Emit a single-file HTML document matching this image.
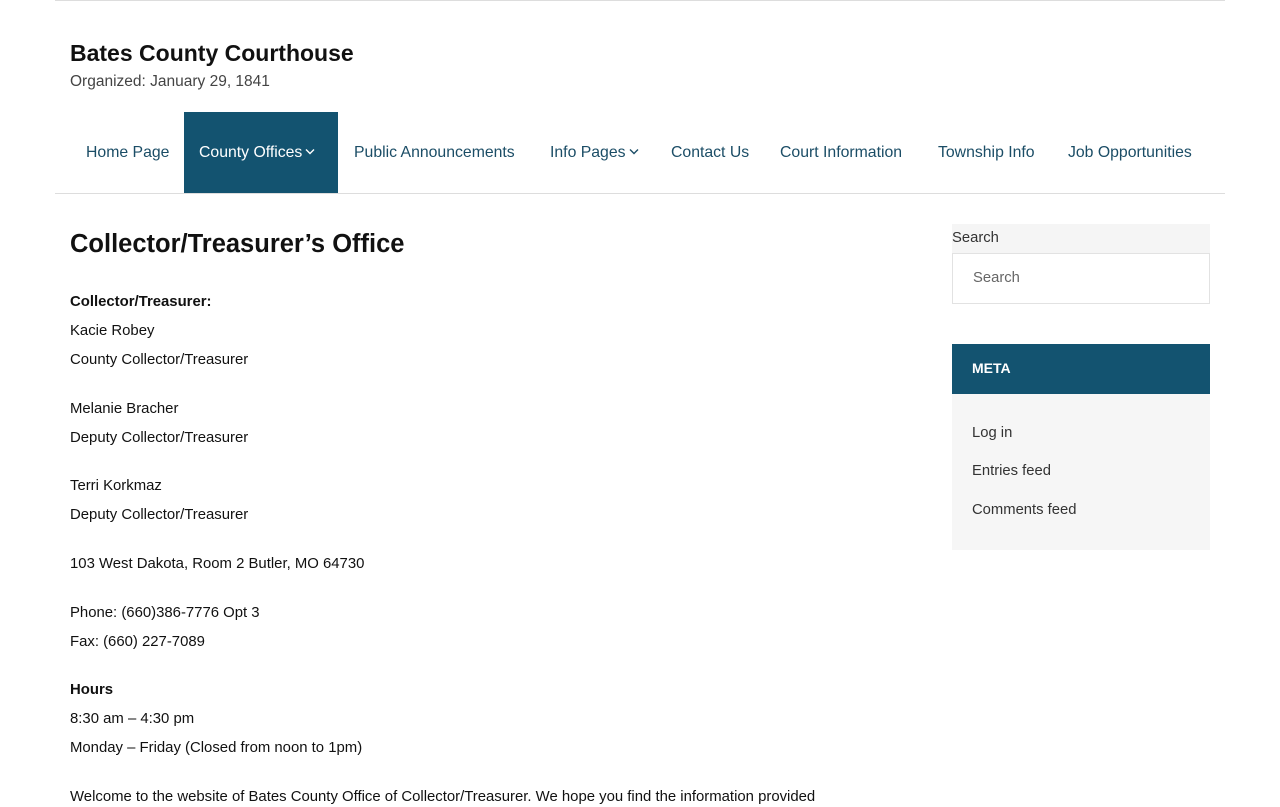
<!DOCTYPE html>
<html><head><meta charset="utf-8"><style>
*{margin:0;padding:0;box-sizing:border-box}
body{width:1280px;height:800px;overflow:hidden;background:#fff;font-family:"Liberation Sans",sans-serif;color:#111;position:relative}
.a{position:absolute;white-space:nowrap}
.t{font-size:14.9px;line-height:20px;left:70px}
.nav{font-size:15.8px;color:#1b4d66;line-height:20px;top:143px}
.b{font-weight:bold}
svg.c{width:10px;height:7px;vertical-align:2px;margin-left:3px}
</style></head><body>
<div class="a" style="left:55px;top:0;width:1170px;height:1px;background:#ddd"></div>
<div class="a b" style="left:70px;top:38px;font-size:23px;line-height:30px;color:#111">Bates County Courthouse</div>
<div class="a" style="left:70px;top:72px;font-size:15.5px;line-height:20px;color:#444">Organized: January 29, 1841</div>
<div class="a" style="left:184px;top:112px;width:154px;height:81px;background:#135370"></div>
<div class="a nav" style="left:86px">Home Page</div>
<div class="a nav" style="left:199px;color:#fff">County Offices<svg class="c" viewBox="0 0 10 7"><path d="M1 1.5L5 5.5 9 1.5" stroke="#fff" stroke-width="1.4" fill="none"/></svg></div>
<div class="a nav" style="left:354px">Public Announcements</div>
<div class="a nav" style="left:550px">Info Pages<svg class="c" viewBox="0 0 10 7"><path d="M1 1.5L5 5.5 9 1.5" stroke="#1b4d66" stroke-width="1.4" fill="none"/></svg></div>
<div class="a nav" style="left:671px">Contact Us</div>
<div class="a nav" style="left:780px">Court Information</div>
<div class="a nav" style="left:938px">Township Info</div>
<div class="a nav" style="left:1068px">Job Opportunities</div>
<div class="a" style="left:55px;top:193px;width:1170px;height:1px;background:#ddd"></div>
<div class="a b" style="left:70px;top:228px;font-size:25.5px;line-height:32px;color:#111">Collector/Treasurer’s Office</div>
<div class="a t b" style="top:292px">Collector/Treasurer:</div>
<div class="a t" style="top:321px">Kacie Robey</div>
<div class="a t" style="top:350px">County Collector/Treasurer</div>
<div class="a t" style="top:399px">Melanie Bracher</div>
<div class="a t" style="top:428px">Deputy Collector/Treasurer</div>
<div class="a t" style="top:476px">Terri Korkmaz</div>
<div class="a t" style="top:505px">Deputy Collector/Treasurer</div>
<div class="a t" style="top:554px">103 West Dakota, Room 2 Butler, MO 64730</div>
<div class="a t" style="top:603px">Phone: (660)386-7776 Opt 3</div>
<div class="a t" style="top:632px">Fax: (660) 227-7089</div>
<div class="a t b" style="top:680px">Hours</div>
<div class="a t" style="top:709px">8:30 am – 4:30 pm</div>
<div class="a t" style="top:738px">Monday – Friday (Closed from noon to 1pm)</div>
<div class="a t" style="top:787px">Welcome to the website of Bates County Office of Collector/Treasurer. We hope you find the information provided</div>
<div class="a" style="left:952px;top:224px;width:258px;height:80px;background:#f5f5f5"></div>
<div class="a" style="left:952px;top:228px;font-size:14.8px;line-height:20px;color:#333">Search</div>
<div class="a" style="left:952px;top:253px;width:258px;height:51px;background:#fff;border:1px solid #e2e2e2"></div>
<div class="a" style="left:973px;top:268px;font-size:14.8px;line-height:20px;color:#666">Search</div>
<div class="a" style="left:952px;top:344px;width:258px;height:206px;background:#f6f6f6"></div>
<div class="a" style="left:952px;top:344px;width:258px;height:50px;background:#135370"></div>
<div class="a b" style="left:972px;top:358px;font-size:14px;line-height:20px;color:#fff">META</div>
<div class="a" style="left:972px;top:423px;font-size:14.8px;line-height:20px;color:#333">Log in</div>
<div class="a" style="left:972px;top:461px;font-size:14.8px;line-height:20px;color:#333">Entries feed</div>
<div class="a" style="left:972px;top:500px;font-size:14.8px;line-height:20px;color:#333">Comments feed</div>
</body></html>
